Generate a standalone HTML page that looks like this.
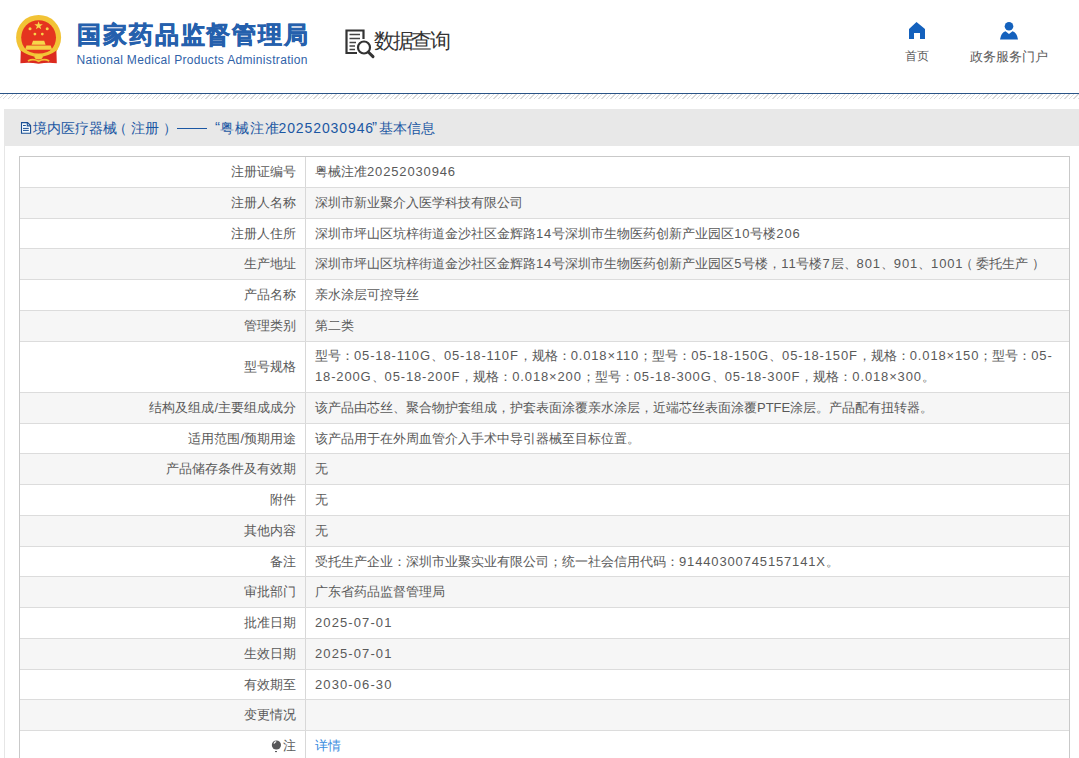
<!DOCTYPE html>
<html><head><meta charset="utf-8">
<style>
*{margin:0;padding:0;box-sizing:border-box}
html,body{width:1079px;height:758px;overflow:hidden;background:#fff;font-family:"Liberation Sans",sans-serif;}
.abs{position:absolute}
#hdr{position:absolute;left:0;top:0;width:1079px;height:93px;background:#fff}
#bline{position:absolute;left:0;top:93px;width:1079px;height:1px;background:#2a5487}
#hatch{position:absolute;left:0;top:94px;width:1079px;height:5px;background:repeating-linear-gradient(135deg,#fff 0,#fff 2.2px,#dadada 2.2px,#dadada 3.18px)}
#panel{position:absolute;left:4px;top:109px;width:1075px;height:700px;border-left:1px solid #e6e6e6;background:#fff}
#tbar{position:absolute;left:4px;top:109px;width:1075px;height:37px;background:#e8e8e8}
#ttl{position:absolute;left:0;top:118px;font-size:14px;line-height:20px;color:#1b57a3;white-space:nowrap}
.ts{position:absolute;top:0}
.td{letter-spacing:0.9px}
#tbl{position:absolute;left:19px;top:156px;width:1051px;height:620px;border:1px solid #c9c9c9;border-bottom:none}
.r{position:absolute;left:0;width:1049px;border-top:1px solid #dcdcdc;font-size:13px;color:#595959}
.r.g{background:#f6f6f6}
.r:first-child{border-top-color:#c9c9c9}
.l{position:absolute;left:0;top:0;bottom:0;width:286px;border-right:1px solid #d8d8d8;text-align:right;padding-right:9px;white-space:nowrap}
.v{position:absolute;left:286px;top:0;right:0;padding-left:9px;white-space:nowrap}
.d{letter-spacing:0.85px}
.dd{letter-spacing:1.1px}
.lp{position:relative;left:-3px}
.rp{position:relative;left:3.5px}
</style></head><body>
<div id="hdr">
  <!-- emblem -->
  <svg class="abs" style="left:0;top:0" width="72" height="72" viewBox="0 0 72 72">
    <circle cx="38.6" cy="37.4" r="22.5" fill="#f2c335"/>
    <circle cx="38.6" cy="37.6" r="17.4" fill="#e5341f"/>
    <path d="M38.6 21.2 l1.05 3.05 3.2 .05 -2.55 1.95 .95 3.1 -2.65-1.85 -2.65 1.85 .95-3.1 -2.55-1.95 3.2-.05z" fill="#f7d54a"/>
    <circle cx="30" cy="28.8" r="1.5" fill="#f7d54a"/><circle cx="47.2" cy="28.8" r="1.5" fill="#f7d54a"/>
    <circle cx="34.9" cy="34.1" r="1.4" fill="#f7d54a"/><circle cx="42.3" cy="34.1" r="1.4" fill="#f7d54a"/>
    <path d="M31.5 44.8 L33 40.7 H44.2 L45.6 44.8 Z" fill="#f7d54a"/>
    <path d="M25 49.8 L26.5 45.6 H50.6 L52.2 49.8 Z" fill="#f5cf45"/>
    <path d="M20.8 50 Q38.6 57 56.4 50 L56.8 63.3 Q48 61.8 38.6 63.8 Q29 61.8 20.4 63.3 Z" fill="#dc2a1f"/>
    <path d="M20.5 48.5 Q38.6 62 56.7 48.5" fill="none" stroke="#f2c335" stroke-width="3.2"/>
    <ellipse cx="38.6" cy="56.8" rx="4.2" ry="2.6" fill="#f4cb3e"/>
    <path d="M28 61 Q33 58.2 38.6 61.2 Q44 58.2 49.2 61" fill="none" stroke="#f2c335" stroke-width="1.8"/>
  </svg>
  <div class="abs" style="left:77px;top:17.5px;font-size:23.5px;line-height:34px;font-weight:bold;color:#2560ad;letter-spacing:1.9px;-webkit-text-stroke:0.6px #2560ad;white-space:nowrap">国家药品监督管理局</div>
  <div class="abs" style="left:76.5px;top:52px;font-size:12px;line-height:16px;color:#2f62a8;letter-spacing:0.33px;white-space:nowrap">National Medical Products Administration</div>
  <!-- data query icon -->
  <svg class="abs" style="left:344px;top:28px" width="34" height="32" viewBox="0 0 34 32">
    <path d="M13 25 H2.5 V2.5 H19.5 V11" fill="none" stroke="#333" stroke-width="2.2"/>
    <path d="M5.5 6.5 H16 M5.5 10.5 H16 M5.5 14.5 H12 M5.5 18 H11 M5.5 21.5 H11" stroke="#444" stroke-width="1.6"/>
    <circle cx="20" cy="19.5" r="6" fill="#fff" stroke="#333" stroke-width="2.2"/>
    <path d="M24.3 24 L29 28.6" stroke="#333" stroke-width="3" stroke-linecap="round"/>
  </svg>
  <div class="abs" style="left:374.3px;top:28px;font-size:20.5px;line-height:26px;color:#333;letter-spacing:-2.5px;white-space:nowrap">数据查询</div>
  <!-- home -->
  <svg class="abs" style="left:908px;top:21px" width="18" height="19" viewBox="0 0 18 19">
    <path d="M1 8 L8.5 1 L17 8 V18 H12 V12 H6 V18 H1 Z" fill="#1461bd"/>
  </svg>
  <div class="abs" style="left:905px;top:48px;font-size:12px;line-height:17px;color:#5a5a5a;white-space:nowrap">首页</div>
  <!-- user -->
  <svg class="abs" style="left:999px;top:21px" width="20" height="20" viewBox="0 0 20 20">
    <circle cx="10" cy="5.2" r="4.3" fill="#1461bd"/>
    <path d="M1 18.6 Q2 11.5 6.5 10.2 L10 13 L13.5 10.2 Q18 11.5 19 18.6 Z" fill="#1461bd"/>
  </svg>
  <div class="abs" style="left:970px;top:48px;font-size:13px;line-height:17px;color:#5a5a5a;white-space:nowrap">政务服务门户</div>
</div>
<div id="bline"></div>
<div id="hatch"></div>
<div id="panel"></div>
<div id="tbar"></div>
<svg class="abs" style="left:17px;top:118px" width="18" height="20" viewBox="0 0 18 20">
  <path d="M4.5 4.6 H10.6 L13.6 7.6 V15.3 H4.5 Z" fill="#f4fafd" stroke="#1a4f94" stroke-width="1.1"/>
  <path d="M10.3 4.6 V7.9 H13.6" fill="none" stroke="#1a4f94" stroke-width="1.1"/>
  <path d="M6 7.5 H8.8 M6 10.4 H11.8 M6 12.4 H11.8" stroke="#1a4f94" stroke-width="1"/>
</svg>
<div id="ttl"><span style="left:32.5px;" class="ts">境内医疗器械</span><span style="left:113px;" class="ts">（</span><span style="left:130.5px;" class="ts">注册</span><span style="left:163px;" class="ts">）</span><span style="left:215px;font-size:15px;top:-1px" class="ts">“</span><span style="left:220px;letter-spacing:1px" class="ts">粤械注准</span><span style="left:278.5px;letter-spacing:0.9px" class="ts">20252030946</span><span style="left:372px;font-size:15px;top:-1px" class="ts">”</span><span style="left:378.5px;" class="ts">基本信息</span><span class="ts" style="left:177px;top:10px;width:30px;height:1.3px;background:#1b57a3"></span></div>
<div id="tbl">
<!--ROWS-->
<div class="r" style="top:-1.00px;height:30.75px;line-height:29.75px"><div class="l">注册证编号</div><div class="v">粤械注准<span class=d>20252030946</span></div></div>
<div class="r g" style="top:29.75px;height:30.75px;line-height:29.75px"><div class="l">注册人名称</div><div class="v">深圳市新业聚介入医学科技有限公司</div></div>
<div class="r" style="top:60.50px;height:30.75px;line-height:29.75px"><div class="l">注册人住所</div><div class="v">深圳市坪山区坑梓街道金沙社区金辉路<span class=d>14</span>号深圳市生物医药创新产业园区<span class=d>10</span>号楼<span class=d>206</span></div></div>
<div class="r g" style="top:91.25px;height:30.75px;line-height:29.75px"><div class="l">生产地址</div><div class="v">深圳市坪山区坑梓街道金沙社区金辉路<span class=d>14</span>号深圳市生物医药创新产业园区<span class=d>5</span>号楼，<span class=d>11</span>号楼<span class=d>7</span>层、<span class=d>801</span>、<span class=d>901</span>、<span class=d>1001</span><span class=lp>（</span>委托生产<span class=rp>）</span></div></div>
<div class="r" style="top:122.00px;height:30.75px;line-height:29.75px"><div class="l">产品名称</div><div class="v">亲水涂层可控导丝</div></div>
<div class="r g" style="top:152.75px;height:30.75px;line-height:29.75px"><div class="l">管理类别</div><div class="v">第二类</div></div>
<div class="r" style="top:183.50px;height:51.25px"><div class="l" style="line-height:50.25px">型号规格</div><div class="v" style="line-height:20.5px;padding-top:4.5px;white-space:normal">型号：<span class=d>05-18-110G</span>、<span class=d>05-18-110F</span>，规格：<span class=d>0.018×110</span>；型号：<span class=d>05-18-150G</span>、<span class=d>05-18-150F</span>，规格：<span class=d>0.018×150</span>；型号：<span class=d>05-</span><br><span class=d>18-200G</span>、<span class=d>05-18-200F</span>，规格：<span class=d>0.018×200</span>；型号：<span class=d>05-18-300G</span>、<span class=d>05-18-300F</span>，规格：<span class=d>0.018×300</span>。</div></div>
<div class="r g" style="top:234.75px;height:30.75px;line-height:29.75px"><div class="l">结构及组成/主要组成成分</div><div class="v">该产品由芯丝、聚合物护套组成，护套表面涂覆亲水涂层，近端芯丝表面涂覆PTFE涂层。产品配有扭转器。</div></div>
<div class="r" style="top:265.50px;height:30.75px;line-height:29.75px"><div class="l">适用范围/预期用途</div><div class="v">该产品用于在外周血管介入手术中导引器械至目标位置。</div></div>
<div class="r g" style="top:296.25px;height:30.75px;line-height:29.75px"><div class="l">产品储存条件及有效期</div><div class="v">无</div></div>
<div class="r" style="top:327.00px;height:30.75px;line-height:29.75px"><div class="l">附件</div><div class="v">无</div></div>
<div class="r g" style="top:357.75px;height:30.75px;line-height:29.75px"><div class="l">其他内容</div><div class="v">无</div></div>
<div class="r" style="top:388.50px;height:30.75px;line-height:29.75px"><div class="l">备注</div><div class="v">受托生产企业：深圳市业聚实业有限公司；统一社会信用代码：<span class=d>91440300745157141X</span>。</div></div>
<div class="r g" style="top:419.25px;height:30.75px;line-height:29.75px"><div class="l">审批部门</div><div class="v">广东省药品监督管理局</div></div>
<div class="r" style="top:450.00px;height:30.75px;line-height:29.75px"><div class="l">批准日期</div><div class="v"><span class=dd>2025-07-01</span></div></div>
<div class="r g" style="top:480.75px;height:30.75px;line-height:29.75px"><div class="l">生效日期</div><div class="v"><span class=dd>2025-07-01</span></div></div>
<div class="r" style="top:511.50px;height:30.75px;line-height:29.75px"><div class="l">有效期至</div><div class="v"><span class=dd>2030-06-30</span></div></div>
<div class="r g" style="top:542.25px;height:30.75px;line-height:29.75px"><div class="l">变更情况</div><div class="v"></div></div>
<div class="r" style="top:573.00px;height:30.75px;line-height:29.75px"><div class="l">注</div><div class="v"><span style='color:#3b8de0'>详情</span></div></div>
<!--/ROWS-->
</div>
<svg class="abs" style="left:270px;top:738px" width="12" height="16" viewBox="0 0 12 16">
  <circle cx="6.4" cy="7" r="4.6" fill="#58585a"/>
  <path d="M4 5.6 Q4.6 3.9 6.2 3.7" stroke="#fff" stroke-width="1.2" fill="none"/>
  <rect x="5" y="13" width="2" height="1.1" fill="#58585a"/>
</svg>
</body></html>
